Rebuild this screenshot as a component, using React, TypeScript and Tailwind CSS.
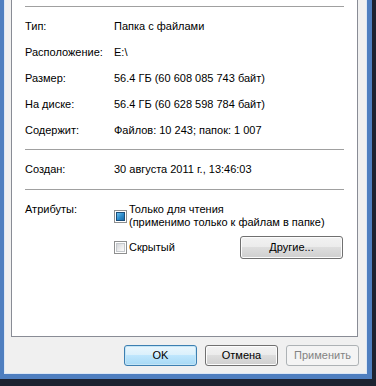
import type { ReactNode } from "react";

function Row({ label, children }: { label: string; children: ReactNode }) {
  return (
    <div className="flex h-[26px] items-center">
      <span className="w-[89px] shrink-0">{label}</span>
      <span className="whitespace-nowrap">{children}</span>
    </div>
  );
}

function Sep() {
  return <div className="h-px bg-[#a0a0a0]" />;
}

function CheckBox({ state }: { state: "mixed" | "off" }) {
  return (
    <span className="flex h-[13px] w-[13px] shrink-0 items-center justify-center border border-[#8e8f8f] bg-white">
      {state === "mixed" ? (
        <span className="h-[9px] w-[9px] border border-[#1b4e7a] bg-[linear-gradient(135deg,#6cc0ef_0%,#2b8bcb_55%,#1c6ca8_100%)]" />
      ) : (
        <span className="h-[9px] w-[9px] border border-[#c4c8cc] bg-[linear-gradient(135deg,#d4d6d9_0%,#eeeeee_60%,#fafafa_100%)]" />
      )}
    </span>
  );
}

function Btn({ children, kind = "normal", className = "" }: { children: ReactNode; kind?: "normal" | "default" | "disabled"; className?: string }) {
  const look =
    kind === "default"
      ? "border-[#3c7fb1] bg-[linear-gradient(#eaf6fd_0%,#d9f0fc_50%,#bee6fd_50%,#a7d9f5_100%)] shadow-[inset_0_0_0_1px_#c4e5f6]"
      : kind === "disabled"
      ? "border-[#adb2b5] bg-[#f4f4f4] text-[#838383]"
      : "border-[#707070] bg-[linear-gradient(#f2f2f2_0%,#ebebeb_50%,#dddddd_50%,#cfcfcf_100%)] shadow-[inset_0_0_0_1px_#fcfcfc]";
  return (
    <button className={`flex items-center justify-center rounded-[3px] border ${look} ${className}`}>
      {children}
    </button>
  );
}

export default function App() {
  return (
    <div className="h-[386px] w-[376px] overflow-hidden bg-[#1d2230] font-['Liberation_Sans',Arial,sans-serif] text-[11px] text-black">
      <div className="flex h-[379px] w-[372px] flex-col border-b-[5px] border-l-4 border-r-[5px] border-[#4f7fc0]">
        <div className="flex flex-1 flex-col border-b border-l border-r border-[#dce7f5] bg-[#f0f0f0] pl-[6px] pr-[8px]">
          <div className="h-[337px] border-b border-l border-r border-[#898c95] bg-white">
            <div className="ml-[13px] w-[319px] pt-[6px]">
              <Sep />
              <div className="mt-[6px]">
                <Row label="Тип:">Папка с файлами</Row>
                <Row label="Расположение:">E:\</Row>
                <Row label="Размер:">56.4 ГБ (60 608 085 743 байт)</Row>
                <Row label="На диске:">56.4 ГБ (60 628 598 784 байт)</Row>
                <Row label="Содержит:">Файлов: 10 243; папок: 1 007</Row>
              </div>
              <div className="mt-[6px]">
                <Sep />
              </div>
              <div className="mt-[6px]">
                <Row label="Создан:">30 августа 2011 г., 13:46:03</Row>
              </div>
              <div className="mt-[7px]">
                <Sep />
              </div>
              <div className="mt-[13px] flex leading-[13px]">
                <span className="w-[89px] shrink-0">Атрибуты:</span>
                <div className="flex flex-1 flex-col">
                  <div className="flex items-center">
                    <CheckBox state="mixed" />
                    <span className="ml-[2px]">
                      Только для чтения
                      <br />
                      (применимо только к файлам в папке)
                    </span>
                  </div>
                  <div className="mt-[7px] flex items-center">
                    <CheckBox state="off" />
                    <span className="ml-[2px]">Скрытый</span>
                    <Btn className="ml-auto mr-px h-[23px] w-[103px]">Другие...</Btn>
                  </div>
                </div>
              </div>
            </div>
          </div>
          <div className="-mr-px flex justify-end gap-[8px] pt-[8px]">
            <Btn kind="default" className="h-[21px] w-[73px]">OK</Btn>
            <Btn className="h-[21px] w-[73px]">Отмена</Btn>
            <Btn kind="disabled" className="h-[21px] w-[73px]">Применить</Btn>
          </div>
        </div>
      </div>
    </div>
  );
}
